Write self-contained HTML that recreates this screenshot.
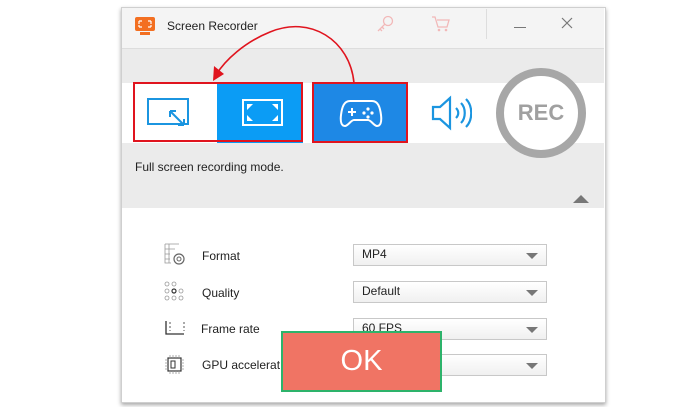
<!DOCTYPE html>
<html><head><style>
body{margin:0;width:700px;height:407px;background:#fff;position:relative;overflow:hidden;font-family:"Liberation Sans",sans-serif}
.a{position:absolute}
.win{left:121px;top:7px;width:483px;height:394px;background:#fff;border:1px solid #cfcfcf;box-shadow:0 2px 4px rgba(0,0,0,.35)}
.lbl{font-size:12px;color:#222}
.dd{left:353px;width:192px;height:20px;border:1px solid #c8c8c8;background:linear-gradient(#fff,#f0f0f0);font-size:12px;color:#222;line-height:18px;text-indent:8px}
.dd:after{content:"";position:absolute;right:8px;top:8px;border-left:6px solid transparent;border-right:6px solid transparent;border-top:6px solid #777}
</style></head><body>
<div class="a win"></div>
<div class="a" style="left:122px;top:8px;width:482px;height:40px;background:#f4f4f4"></div>
<div class="a" style="left:122px;top:48px;width:482px;height:1px;background:#ddd"></div>
<div class="a" style="left:122px;top:49px;width:482px;height:159px;background:#ebebeb"></div>
<div class="a" style="left:122px;top:83px;width:482px;height:60px;background:#fff"></div>
<svg class="a" style="left:134px;top:16px" width="22" height="20"><rect x="1" y="1" width="20" height="14" rx="2" fill="#f36f21"/><rect x="6" y="16" width="10" height="3" fill="#f36f21"/><path d="M5 5h3M5 5v3M17 5h-3M17 5v3M5 11v-2M5 11h3M17 11h-3M17 11v-2" stroke="#fff" stroke-width="1.2" fill="none"/></svg>
<div class="a lbl" style="left:167px;top:19px;font-size:12px">Screen Recorder</div>
<svg class="a" style="left:375px;top:14px" width="20" height="20"><circle cx="13" cy="7" r="4.5" fill="none" stroke="#f2b8b8" stroke-width="1.3"/><path d="M10 10l-7 7M5 15l2 2M7 13l2 2" stroke="#f2b8b8" stroke-width="1.3"/></svg>
<svg class="a" style="left:430px;top:14px" width="22" height="20"><path d="M2 3h3l3 10h9l2-7H7" fill="none" stroke="#f2b8b8" stroke-width="1.3"/><circle cx="9" cy="16" r="1.3" fill="#f2b8b8"/><circle cx="16" cy="16" r="1.3" fill="#f2b8b8"/></svg>
<div class="a" style="left:486px;top:9px;width:1px;height:30px;background:#ddd"></div>
<div class="a" style="left:514px;top:27px;width:12px;height:1px;background:#777"></div>
<svg class="a" style="left:561px;top:17px" width="12" height="12"><path d="M1 1l10 10M11 1L1 11" stroke="#777" stroke-width="1.2"/></svg>
<div class="a" style="left:217px;top:83px;width:86px;height:60px;background:#0b9cf5"></div>
<div class="a" style="left:312px;top:83px;width:95px;height:60px;background:#1e88e5"></div>
<div class="a" style="left:133px;top:82px;width:170px;height:60px;border:2px solid #e0141e;box-sizing:border-box"></div>
<div class="a" style="left:312px;top:82px;width:96px;height:61px;border:2px solid #e0141e;box-sizing:border-box"></div>
<svg class="a" style="left:146px;top:97px" width="48" height="32"><rect x="2" y="2" width="40" height="25" fill="none" stroke="#1b95e0" stroke-width="2"/><path d="M24 14l14 14M24 14v6M24 14h6M38 28v-6M38 28h-6" stroke="#1b95e0" stroke-width="2" fill="none"/></svg>
<svg class="a" style="left:241px;top:98px" width="44" height="30"><rect x="2" y="2" width="39" height="25" fill="none" stroke="#fff" stroke-width="2"/><path d="M6 6h6l-6 6zM37 6h-6l6 6zM6 23h6l-6-6zM37 23h-6l6-6z" fill="#fff"/></svg>
<svg class="a" style="left:338px;top:97px" width="46" height="32"><path d="M12 4h22c6 0 8 6 9 14s-1 11-4 11-6-6-9-6H16c-3 0-6 6-9 6s-5-3-4-11S6 4 12 4z" fill="none" stroke="#fff" stroke-width="2"/><path d="M14 11v8M10 15h8" stroke="#fff" stroke-width="2"/><circle cx="30" cy="12" r="1.6" fill="#fff"/><circle cx="34" cy="16" r="1.6" fill="#fff"/><circle cx="26" cy="16" r="1.6" fill="#fff"/><circle cx="30" cy="20" r="1.6" fill="#fff"/></svg>
<svg class="a" style="left:430px;top:95px" width="42" height="36"><path d="M3 12h7l10-9v30l-10-9H3z" fill="none" stroke="#1b95e0" stroke-width="2.2"/><path d="M26 13c3 3 3 7 0 10M31 8c5 5 5 15 0 20M36 4c7 7 7 21 0 28" fill="none" stroke="#1b95e0" stroke-width="2.2"/></svg>
<div class="a" style="left:496px;top:68px;width:74px;height:74px;border:8px solid #a7a7a7;border-radius:50%;background:#fff"></div>
<div class="a" style="left:496px;top:101px;width:90px;text-align:center;font-weight:bold;font-size:22px;line-height:24px;color:#a0a0a0">REC</div>
<svg class="a" style="left:200px;top:20px" width="170" height="70"><path d="M154 63C150 20 110 -5 70 12 45 22 25 40 16 55" fill="none" stroke="#e0141e" stroke-width="1.6"/><path d="M13 61l1-15 10 8z" fill="#e0141e"/></svg>
<div class="a lbl" style="left:135px;top:160px">Full screen recording mode.</div>
<div class="a" style="left:573px;top:195px;border-left:8px solid transparent;border-right:8px solid transparent;border-bottom:8px solid #777"></div>
<svg class="a" style="left:164px;top:243px" width="24" height="24"><path d="M1 1h14M1 1v19h6M5 1v19M1 6h10M1 11h5M1 16h5" stroke="#999" fill="none" stroke-width=".8"/><circle cx="15" cy="16" r="5" fill="#fff" stroke="#666" stroke-width="1.2"/><circle cx="15" cy="16" r="2" fill="none" stroke="#666"/></svg>
<div class="a lbl" style="left:202px;top:249px">Format</div>
<div class="a dd" style="top:244px">MP4</div>
<svg class="a" style="left:164px;top:281px" width="24" height="22"><g fill="none" stroke="#999" stroke-width=".8"><circle cx="3" cy="3" r="2"/><circle cx="10" cy="3" r="2"/><circle cx="3" cy="10" r="2"/><circle cx="17" cy="10" r="2"/><circle cx="3" cy="17" r="2"/><circle cx="10" cy="17" r="2"/><circle cx="17" cy="17" r="2"/></g><circle cx="10" cy="10" r="2" fill="none" stroke="#333" stroke-width="1.2"/></svg>
<div class="a lbl" style="left:202px;top:286px">Quality</div>
<div class="a dd" style="top:281px">Default</div>
<svg class="a" style="left:164px;top:319px" width="24" height="18"><path d="M2 2v13h18" stroke="#333" fill="none" stroke-width="1.3"/><path d="M6 3v9M20 3v9" stroke="#555" stroke-dasharray="2 2" fill="none"/></svg>
<div class="a lbl" style="left:201px;top:322px">Frame rate</div>
<div class="a dd" style="top:318px">60 FPS</div>
<svg class="a" style="left:164px;top:354px" width="22" height="22"><rect x="4" y="4" width="13" height="13" fill="none" stroke="#333" stroke-width="1.2"/><rect x="7" y="7" width="4" height="7" fill="none" stroke="#333"/><path d="M6 1v3M9 1v3M12 1v3M15 1v3M6 17v3M9 17v3M12 17v3M15 17v3M1 6h3M1 9h3M1 12h3M1 15h3M17 6h3M17 9h3M17 12h3M17 15h3" stroke="#999" stroke-width=".8"/></svg>
<div class="a lbl" style="left:202px;top:358px">GPU accelerat</div>
<div class="a dd" style="top:354px"></div>
<div class="a" style="left:281px;top:331px;width:161px;height:61px;background:#f07464;border:2px solid #2db36b;box-sizing:border-box;color:#fff;font-size:29px;text-align:center;line-height:57px">OK</div>
</body></html>
